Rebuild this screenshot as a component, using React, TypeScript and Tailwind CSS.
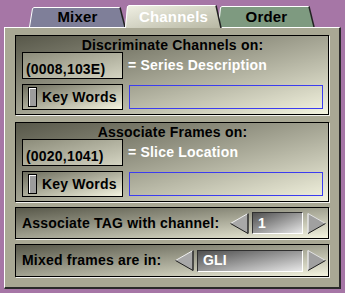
import React from "react";

type TabProps = {
  label: string;
  w: number;
  h: number;
  topL: number;
  topR: number;
  fill: string;
  gradient?: boolean;
  className: string;
};

// trapezoid tab drawn behind its label
const Tab = ({ label, w, h, topL, topR, fill, gradient, className }: TabProps) => {
  const id = `g-${label}`;
  return (
    <div className={`relative flex items-center justify-center ${className}`}>
      <svg className="absolute inset-0" width={w} height={h} viewBox={`0 0 ${w} ${h}`}>
        {gradient && (
          <defs>
            <linearGradient id={id} x1="0" y1="0" x2="1" y2="1">
              <stop offset="0" stopColor="#f0f0e4" />
              <stop offset="1" stopColor="#b8b8a4" />
            </linearGradient>
          </defs>
        )}
        <polygon
          points={`0,${h} ${topL - 1},1.5 ${topL + 1},0.5 ${topR},0.5 ${w - 1},${h}`}
          fill={gradient ? `url(#${id})` : fill}
        />
        <polyline
          points={`0.5,${h} ${topL - 0.5},1.5 ${topL + 1},0.5 ${topR},0.5`}
          stroke="#ffffff"
          fill="none"
        />
        <line x1={topR} y1={0.5} x2={w - 1} y2={h} stroke="#222222" strokeWidth={1.5} />
      </svg>
      <span className="relative text-[15px] leading-[18px] tracking-[0.2px]">{label}</span>
    </div>
  );
};

const Arrow = ({ dir }: { dir: "left" | "right" }) =>
  dir === "left" ? (
    <svg width={19} height={21} viewBox="0 0 19 21">
      <polygon points="0.5,10.5 18,0.5 18,20.5" fill="#a8a8a8" />
      <line x1={0.5} y1={10.5} x2={18} y2={0.5} stroke="#f0f0f0" />
      <line x1={0.5} y1={10.5} x2={18} y2={20.5} stroke="#1e1e1e" />
      <line x1={18} y1={0.5} x2={18} y2={20.5} stroke="#2a2a2a" strokeWidth={1.5} />
    </svg>
  ) : (
    <svg width={19} height={21} viewBox="0 0 19 21">
      <polygon points="1,0.5 18.5,10.5 1,20.5" fill="#a0a0a0" />
      <line x1={1} y1={0.5} x2={1} y2={20.5} stroke="#e4e4e4" strokeWidth={1.5} />
      <line x1={1} y1={0.5} x2={18.5} y2={10.5} stroke="#e0e0e0" />
      <line x1={1} y1={20.5} x2={18.5} y2={10.5} stroke="#1e1e1e" />
    </svg>
  );

const Group = ({ children, className }: { children: React.ReactNode; className: string }) => (
  <div
    className={`border border-black bg-linear-to-br from-[#58584a] to-[#f4f4e0] shadow-[1px_1px_0_#f2f2ee] ${className}`}
  >
    {children}
  </div>
);

const TagSection = ({ title, tag, field }: { title: string; tag: string; field: string }) => (
  <>
    <div className="h-[16px] leading-[16px] mt-[1px] text-center text-black">{title}</div>
    <div className="flex items-center h-[26px] mt-[-1px]">
      <div className="w-[101px] h-[27px] border border-black bg-linear-to-br from-[#8c8c7a] to-[#d4d4c2] flex items-end pl-[3px] pb-[1px] text-black leading-[16px]">
        {tag}
      </div>
      <span className="ml-[5px] text-white">{field}</span>
    </div>
    <div className="flex items-center h-[26px] mt-[6px]">
      <div className="w-[101px] h-[26px] border border-black bg-linear-to-br from-[#6e6e5e] to-[#f4f4e0] flex items-center pl-[5px]">
        <div className="w-[9px] h-[20px] border border-black bg-[#9c9c9c] shadow-[inset_1px_1px_0_#ffffff]" />
        <span className="ml-[5px] text-black">Key Words</span>
      </div>
      <div className="ml-[6px] flex-1 h-[24px] border border-[#3c3cf0]" />
    </div>
  </>
);

export default function App() {
  return (
    <div className="w-[345px] h-[293px] overflow-hidden bg-[#a676a6] pt-[5px] font-['Liberation_Sans',Arial,sans-serif] font-bold text-[14px] tracking-[0.2px]">
      <div className="flex items-end h-[22px] pl-[29px]">
        <Tab label="Mixer" w={97} h={20} topL={4} topR={91} fill="#7f7f99" className="w-[97px] h-[20px] text-black" />
        <Tab
          label="Channels"
          w={97}
          h={23}
          topL={3}
          topR={91}
          fill="#e0e0d0"
          gradient
          className="-ml-[1px] w-[97px] h-[23px] -mb-[1px] z-10 text-white"
        />
        <Tab label="Order" w={97} h={21} topL={3} topR={91} fill="#7e9a80" className="-ml-[4px] w-[97px] h-[21px] text-black" />
      </div>

      <div className="ml-[4px] w-[337px] h-[262px] bg-[#a9a894] border-l border-t border-white border-r-2 border-b-2 border-r-[#2a2a2a] border-b-[#2a2a2a] px-[10px] pt-[7px]">
        <Group className="h-[80px] pl-[6px] pr-[5px] flex flex-col">
          <TagSection title="Discriminate Channels on:" tag="(0008,103E)" field="= Series Description" />
        </Group>

        <Group className="mt-[7px] h-[80px] pl-[6px] pr-[5px] flex flex-col">
          <TagSection title="Associate Frames on:" tag="(0020,1041)" field="= Slice Location" />
        </Group>

        <Group className="mt-[5px] h-[32px] pl-[6px] pr-[2px] flex items-center">
          <span className="text-black">Associate TAG with channel:</span>
          <div className="ml-auto flex items-center">
            <Arrow dir="left" />
            <div className="ml-[3px] w-[51px] h-[22px] border-t border-l border-[#303030] border-r border-b border-r-white border-b-white bg-linear-to-br from-[#505050] to-[#e8e8e8] flex items-center pl-[5px] text-white">
              1
            </div>
            <div className="ml-[4px]">
              <Arrow dir="right" />
            </div>
          </div>
        </Group>

        <Group className="mt-[5px] h-[33px] pl-[6px] pr-[2px] flex items-center">
          <span className="text-black">Mixed frames are in:</span>
          <div className="ml-auto flex items-center">
            <Arrow dir="left" />
            <div className="ml-[3px] w-[106px] h-[22px] border-t border-l border-[#303030] border-r border-b border-r-white border-b-white bg-linear-to-br from-[#505050] to-[#e8e8e8] flex items-center pl-[5px] text-white">
              GLI
            </div>
            <div className="ml-[4px]">
              <Arrow dir="right" />
            </div>
          </div>
        </Group>
      </div>
    </div>
  );
}
